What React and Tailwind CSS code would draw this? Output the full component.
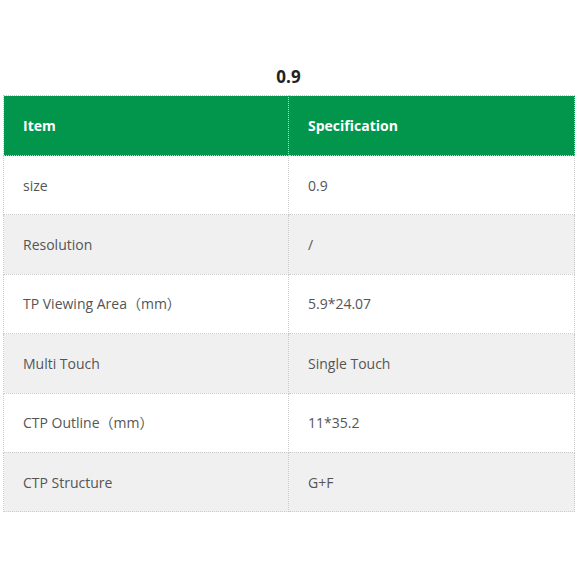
import React from "react";

const rows = [
  ["size", "0.9"],
  ["Resolution", "/"],
  ["TP Viewing Area（mm）", "5.9*24.07"],
  ["Multi Touch", "Single Touch"],
  ["CTP Outline（mm）", "11*35.2"],
  ["CTP Structure", "G+F"],
];

export default function App() {
  return (
    <div
      className="w-[577px] h-[577px] bg-white pt-[65px] px-[3px]"
      style={{ fontFamily: '"Segoe UI", "Open Sans", "Noto Sans CJK SC", sans-serif' }}
    >
      <div className="text-center text-[17px] font-bold text-[#222] leading-[24px] mb-[6px]">0.9</div>
      <table className="w-[572px] border-collapse table-fixed text-[14px]">
        <thead>
          <tr className="bg-[#01964c] text-white">
            <th className="w-[285px] h-[60px] border border-dotted border-[#ccc] text-left font-bold px-[19px]">Item</th>
            <th className="h-[60px] border border-dotted border-[#ccc] text-left font-bold px-[19px]">Specification</th>
          </tr>
        </thead>
        <tbody>
          {rows.map(([a, b], i) => (
            <tr key={i} className={i % 2 === 1 ? "bg-[#f0f0f0]" : "bg-white"}>
              <td className="h-[59.4px] border border-dotted border-[#ccc] px-[19px] text-[#555]">{a}</td>
              <td className="h-[59.4px] border border-dotted border-[#ccc] px-[19px] text-[#555]">{b}</td>
            </tr>
          ))}
        </tbody>
      </table>
    </div>
  );
}
